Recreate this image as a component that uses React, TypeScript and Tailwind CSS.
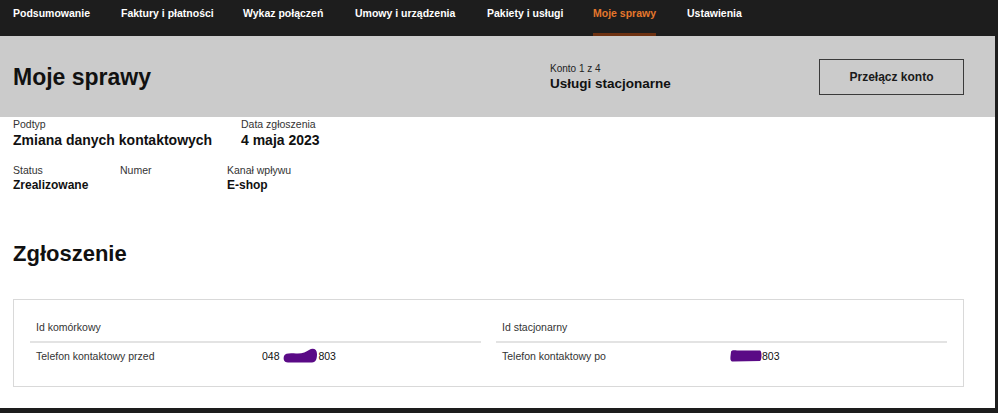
import React from "react";

const navItems = [
  { label: "Podsumowanie", w: "w-[108px]" },
  { label: "Faktury i płatności", w: "w-[122px]" },
  { label: "Wykaz połączeń", w: "w-[112px]" },
  { label: "Umowy i urządzenia", w: "w-[132px]" },
  { label: "Pakiety i usługi", w: "w-[106px]" },
  { label: "Moje sprawy", w: "w-[94px]" },
  { label: "Ustawienia", w: "w-[90px]" },
];

function Scribble({ wide }: { wide?: boolean }) {
  if (wide) {
    return (
      <svg width="36" height="18" viewBox="0 0 36 18" className="inline-block align-middle">
        <path
          d="M2 9 C3 6 8 6 14 6.5 C20 7 24 5 27 3 C31 0.5 35 2 35 7 C35 12 34 15 30 15.5 L6 15.5 C2 15.5 1 12 2 9 Z"
          fill="#5a0a86"
        />
      </svg>
    );
  }
  return (
    <svg width="33" height="14" viewBox="0 0 33 14" className="inline-block align-middle">
      <path d="M2 3 C2 1.5 4 1 8 1.5 L31 1.5 C33 2 33 11 31 12 L4 12.5 C1 12.5 1 10 2 3 Z" fill="#5a0a86" />
    </svg>
  );
}

export default function App() {
  return (
    <div
      className="w-[998px] h-[413px] bg-[#1d1d1d] overflow-hidden"
      style={{ fontFamily: '"Liberation Sans", Arial, sans-serif' }}
    >
      <div className="w-[995px] h-[408px] bg-white flex flex-col">
        {/* top navigation */}
        <div className="h-9 bg-[#1d1d1d] flex pl-[13px]">
          {navItems.map((item) => (
            <div key={item.label} className={`${item.w} h-full shrink-0`}>
              <span
                className={`inline-block h-full pt-[6px] text-[10.5px] font-bold leading-[14px] ${
                  item.label === "Moje sprawy"
                    ? "text-[#e5772c] border-b-[3px] border-[#6e3212]"
                    : "text-white"
                }`}
              >
                {item.label}
              </span>
            </div>
          ))}
        </div>

        {/* header band */}
        <div className="h-[81px] bg-[#cbcbcb] flex items-center pl-[13px] pr-[31px]">
          <h1 className="flex-1 text-[23px] font-bold text-[#111] leading-7">Moje sprawy</h1>
          <div className="w-[269px] pt-[2px]">
            <div className="text-[10px] text-[#222] leading-[13px]">Konto 1 z 4</div>
            <div className="text-[13.5px] font-bold text-[#111] leading-[18px]">Usługi stacjonarne</div>
          </div>
          <button className="w-[145px] h-9 border border-[#3a3a3a] text-[12px] font-bold text-[#1a1a1a]">
            Przełącz konto
          </button>
        </div>

        {/* details */}
        <div className="pl-[13px] pr-[31px]">
          <div className="flex">
            <div className="w-[228px]">
              <div className="text-[10.5px] text-[#333] leading-[14px]">Podtyp</div>
              <div className="text-[14px] font-bold text-[#111] leading-[18px]">Zmiana danych kontaktowych</div>
            </div>
            <div>
              <div className="text-[10.5px] text-[#333] leading-[14px]">Data zgłoszenia</div>
              <div className="text-[14px] font-bold text-[#111] leading-[18px]">4 maja 2023</div>
            </div>
          </div>

          <div className="flex mt-[14px]">
            <div className="w-[107px]">
              <div className="text-[10.5px] text-[#333] leading-[14px]">Status</div>
              <div className="text-[12px] font-bold text-[#111] leading-4">Zrealizowane</div>
            </div>
            <div className="w-[107px]">
              <div className="text-[10.5px] text-[#333] leading-[14px]">Numer</div>
              <div className="h-4" />
            </div>
            <div>
              <div className="text-[10.5px] text-[#333] leading-[14px]">Kanał wpływu</div>
              <div className="text-[12px] font-bold text-[#111] leading-4">E-shop</div>
            </div>
          </div>

          <h2 className="mt-[47px] text-[22px] font-bold text-[#111] leading-7">Zgłoszenie</h2>

          <div className="mt-[31px] border border-[#d9d9d9] px-4 pt-5 pb-[23px] grid grid-cols-2 gap-[15px]">
            <div>
              <div className="pl-[6px] pb-[7px] border-b-2 border-[#e3e3e3] text-[10.5px] text-[#333] leading-[14px]">
                Id komórkowy
              </div>
              <div className="flex pl-[6px] pt-[6px] text-[10.5px] leading-[14px]">
                <div className="w-[226px] text-[#333]">Telefon kontaktowy przed</div>
                <div className="flex items-center text-[#111] h-[14px]">
                  048&nbsp;
                  <Scribble wide />
                  803
                </div>
              </div>
            </div>
            <div>
              <div className="pl-[6px] pb-[7px] border-b-2 border-[#e3e3e3] text-[10.5px] text-[#333] leading-[14px]">
                Id stacjonarny
              </div>
              <div className="flex pl-[6px] pt-[6px] text-[10.5px] leading-[14px]">
                <div className="w-[227px] text-[#333]">Telefon kontaktowy po</div>
                <div className="flex items-center text-[#111] h-[14px]">
                  <Scribble />
                  803
                </div>
              </div>
            </div>
          </div>
        </div>
      </div>
    </div>
  );
}
